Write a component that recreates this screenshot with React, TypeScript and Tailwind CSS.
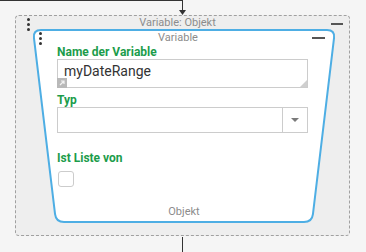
import React from "react";

const BLUE = "#4eaee4";

function Dots() {
  return (
    <div className="flex flex-col gap-[2px]">
      <span className="h-[3px] w-[3px] rounded-full bg-[#333]" />
      <span className="h-[3px] w-[3px] rounded-full bg-[#333]" />
      <span className="h-[3px] w-[3px] rounded-full bg-[#333]" />
    </div>
  );
}

function Label({ children, className = "" }: { children: React.ReactNode; className?: string }) {
  return (
    <div className={`text-[12px] font-bold leading-[14px] text-[#1c9c4b] ${className}`}>
      {children}
    </div>
  );
}

export default function App() {
  return (
    <div className="relative h-[252px] w-[366px] overflow-hidden bg-[#f5f5f5] font-['Roboto',sans-serif]">
      {/* incoming edge */}
      <div className="absolute left-0 top-0 h-px w-[183px] bg-[#333]" />
      <div className="absolute left-[182px] top-0 h-[11px] w-px bg-[#333]" />
      <svg className="absolute left-[179px] top-[10px]" width="7" height="5" viewBox="0 0 7 5">
        <path d="M0 0H7L3.5 5Z" fill="#333" />
      </svg>
      {/* outgoing edge */}
      <div className="absolute left-[182px] top-[237px] h-[15px] w-px bg-[#333]" />

      {/* outer group: Variable: Objekt */}
      <div className="relative ml-[15px] mt-[15px] h-[221px] w-[335px] rounded-[4px] border border-dashed border-[#a0a0a0] bg-[#eeeeee]">
        <div className="absolute left-[11px] top-[2px]">
          <Dots />
        </div>
        <div className="absolute right-[6px] top-[7px] h-[2px] w-[12px] bg-[#555]" />
        <div className="flex h-[13px] justify-center pr-[10px] pt-[1px] text-[11px] leading-[12px] text-[#8c8c8c]">
          Variable: Objekt
        </div>

        {/* inner block: Variable */}
        <div className="relative ml-[16px] flex h-[194px] w-[304px] flex-col">
          <svg
            className="absolute inset-0 overflow-visible"
            width="304"
            height="194"
            viewBox="0 0 304 194"
          >
            <path
              d="M1.95 8.94Q1 1 9 1H295Q303 1 302.05 8.94L280.95 185.06Q280 193 272 193H32Q24 193 23.05 185.06Z"
              fill="#fff"
              stroke={BLUE}
              strokeWidth="2"
            />
          </svg>
          <div className="absolute left-[7px] top-[3px]">
            <Dots />
          </div>
          <div className="absolute right-[11px] top-[8px] h-[2px] w-[13px] bg-[#555]" />

          <div className="relative flex h-[15px] justify-center pr-[12px] pt-[2px] text-[11px] leading-[13px] text-[#8c8c8c]">
            Variable
          </div>

          <div className="relative pl-[25px] pr-[28px]">
            <Label className="mt-[1px]">Name der Variable</Label>
            <div className="relative h-[29px] border border-[#cccccc] bg-white pl-[6px] pt-[3px] text-[14px] leading-[16px] text-[#333]">
              myDateRange
              <svg className="absolute -bottom-px -left-px" width="10" height="10" viewBox="0 0 10 10">
                <rect width="10" height="10" fill="#b9b9b9" />
                <path d="M3 7L7 3M4 3H7V6" stroke="#f2f2f2" strokeWidth="1.2" fill="none" />
              </svg>
              <svg className="absolute bottom-0 right-0" width="7" height="7" viewBox="0 0 7 7">
                <path d="M7 0V7H0Z" fill="#cfcfcf" />
              </svg>
            </div>

            <Label className="mt-[5px]">Typ</Label>
            <div className="flex h-[26px] border border-[#cccccc] bg-white">
              <div className="flex-1" />
              <div className="flex w-[25px] items-center justify-center border-l border-[#cccccc]">
                <svg width="8" height="4" viewBox="0 0 8 4">
                  <path d="M0 0H8L4 4Z" fill="#7a7a7a" />
                </svg>
              </div>
            </div>

            <Label className="mt-[18px]">Ist Liste von</Label>
            <div className="ml-[1px] mt-[6px] h-[16px] w-[16px] rounded-[3px] border border-[#cccccc] bg-white" />
          </div>

          <div className="relative mt-auto pb-[5px] text-center text-[11px] leading-[13px] text-[#8c8c8c]">
            Objekt
          </div>
        </div>
      </div>
    </div>
  );
}
